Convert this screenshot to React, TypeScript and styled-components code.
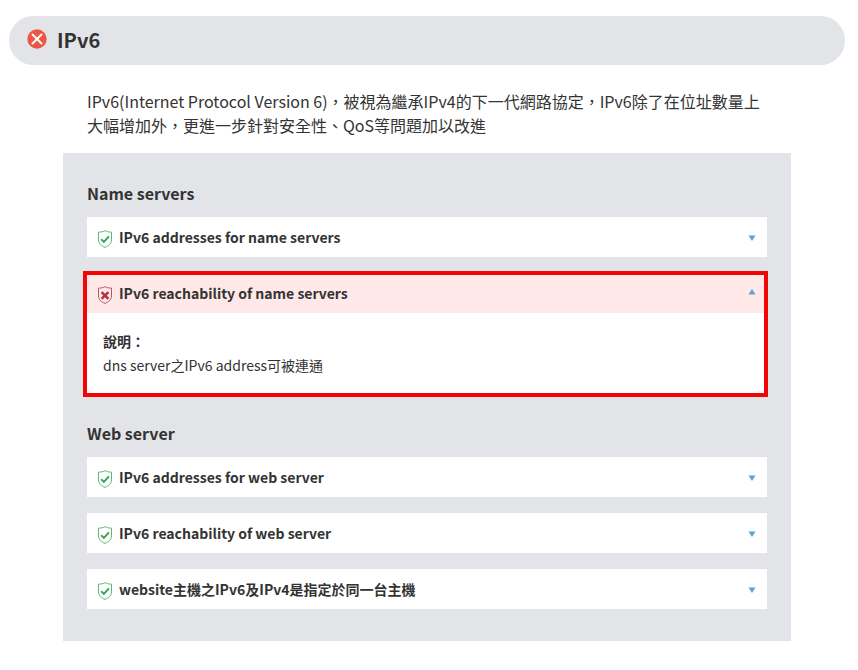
import React, { useState } from "react";
import styled, { createGlobalStyle } from "styled-components";

const GlobalStyle = createGlobalStyle`
  *, *::before, *::after { box-sizing: border-box; }
  body {
    margin: 0;
    background: #fff;
    color: #333;
    font-family: "Noto Sans CJK TC", "Noto Sans", sans-serif;
    font-size: 16px;
    line-height: 24px;
  }
`;

const Page = styled.main`
  padding: 16px 13px 24px 9px;
`;

const TitleBar = styled.header`
  display: flex;
  align-items: center;
  gap: 10px;
  min-height: 49px;
  padding: 0 18px 2px;
  border-radius: 25px;
  background: #e3e4e8;
`;

const Title = styled.h1`
  margin: 0;
  font-size: 20px;
  line-height: 32px;
  font-weight: 700;
`;

const TitleIcon = styled.svg`
  flex: none;
  width: 20px;
  height: 20px;
  margin-bottom: 2px;
`;

const Content = styled.div`
  margin: 0 54px;
`;

const Intro = styled.p`
  margin: 0;
  padding: 24px 24px 16px;
`;

const Panel = styled.div`
  display: flex;
  flex-direction: column;
  gap: 24px;
  padding: 24px 24px 32px;
  background: #e3e4e8;
`;

const SectionTitle = styled.h2`
  margin: 0 0 8px;
  font-size: 16px;
  line-height: 32px;
  font-weight: 700;
`;

const Items = styled.div`
  display: flex;
  flex-direction: column;
  gap: 16px;
`;

const Item = styled.div`
  position: relative;
  background: #fff;
`;

const ItemHeading = styled.h3`
  margin: 0;
  font-size: 14px;
`;

const Toggle = styled.button<{ $failed: boolean }>`
  display: flex;
  align-items: center;
  gap: 7px;
  width: 100%;
  min-height: 40px;
  padding: 0 11px;
  border: 0;
  background: ${({ $failed }) => ($failed ? "#ffe8e8" : "#fff")};
  color: inherit;
  font: inherit;
  font-weight: 700;
  line-height: 24px;
  text-align: left;
  cursor: pointer;
`;

const Label = styled.span`
  flex: 1;
`;

const Shield = styled.svg`
  flex: none;
  width: 14px;
  height: 18px;
  margin-top: 3px;
`;

const Arrow = styled.svg<{ $open: boolean }>`
  flex: none;
  width: 8px;
  height: 6px;
  margin-top: ${({ $open }) => ($open ? "0" : "2px")};
  margin-bottom: ${({ $open }) => ($open ? "2px" : "0")};
`;

const Details = styled.div`
  padding: 16px;
  font-size: 14px;
`;

const Term = styled.strong`
  display: block;
`;

const Highlight = styled.div`
  position: absolute;
  inset: -2px -1px -4px -4px;
  border: 4px solid #f20505;
  pointer-events: none;
`;

function ShieldIcon({ failed }: { failed: boolean }) {
  const color = failed ? "#aa3340" : "#3ca454";
  return (
    <Shield viewBox="0 0 14 18" fill="none" stroke={color} aria-hidden="true">
      <path
        d="M7 .6C5.400 1.700 3.200 2.100.5 2.100V10c0 3.600 2.700 5.700 6.500 7.400 3.800-1.700 6.500-3.800 6.500-7.400V2.100C10.800 2.100 8.600 1.700 7 .6Z"
        strokeWidth={0.8}
      />
      {failed ? (
        <path d="m3.600 6.200 6.800 6.600m0-6.600-6.800 6.600" strokeWidth={2.400} />
      ) : (
        <path d="m3.200 9.300 2.700 2.600 5-5.600" strokeWidth={2} />
      )}
    </Shield>
  );
}

interface CheckProps {
  id: string;
  label: string;
  failed?: boolean;
  highlighted?: boolean;
  children?: React.ReactNode;
}

function Check({ id, label, failed = false, highlighted = false, children }: CheckProps) {
  const [open, setOpen] = useState(failed);
  return (
    <Item>
      <ItemHeading>
        <Toggle
          type="button"
          $failed={failed}
          aria-expanded={open}
          aria-controls={open && children ? id : undefined}
          onClick={() => setOpen(!open)}
        >
          <ShieldIcon failed={failed} />
          <Label>{label}</Label>
          <Arrow $open={open} viewBox="0 0 8 6" fill="#56a8d0" aria-hidden="true">
            <path d={open ? "M4 0 7.500 5.500h-7Z" : "M.5.5h7L4 6Z"} />
          </Arrow>
        </Toggle>
      </ItemHeading>
      {open && children && <Details id={id}>{children}</Details>}
      {highlighted && <Highlight />}
    </Item>
  );
}

export default function App() {
  return (
    <>
      <GlobalStyle />
      <Page>
        <TitleBar>
          <TitleIcon viewBox="0 0 20 20" aria-hidden="true">
            <circle cx="10" cy="10" r="9.700" fill="#ee5644" />
            <path d="m5.500 5.500 9 9m0-9-9 9" stroke="#fff" strokeWidth="2" strokeLinecap="round" />
          </TitleIcon>
          <Title>IPv6</Title>
        </TitleBar>
        <Content>
          <Intro>
            IPv6(Internet Protocol Version 6)，被視為繼承IPv4的下一代網路協定，IPv6除了在位址數量上大幅增加外，更進一步針對安全性、QoS等問題加以改進
          </Intro>
          <Panel>
            <section>
              <SectionTitle>Name servers</SectionTitle>
              <Items>
                <Check id="ns-address" label="IPv6 addresses for name servers" />
                <Check id="ns-reach" label="IPv6 reachability of name servers" failed highlighted>
                  <Term>說明：</Term>
                  dns server之IPv6 address可被連通
                </Check>
              </Items>
            </section>
            <section>
              <SectionTitle>Web server</SectionTitle>
              <Items>
                <Check id="web-address" label="IPv6 addresses for web server" />
                <Check id="web-reach" label="IPv6 reachability of web server" />
                <Check id="web-same" label="website主機之IPv6及IPv4是指定於同一台主機" />
              </Items>
            </section>
          </Panel>
        </Content>
      </Page>
    </>
  );
}
